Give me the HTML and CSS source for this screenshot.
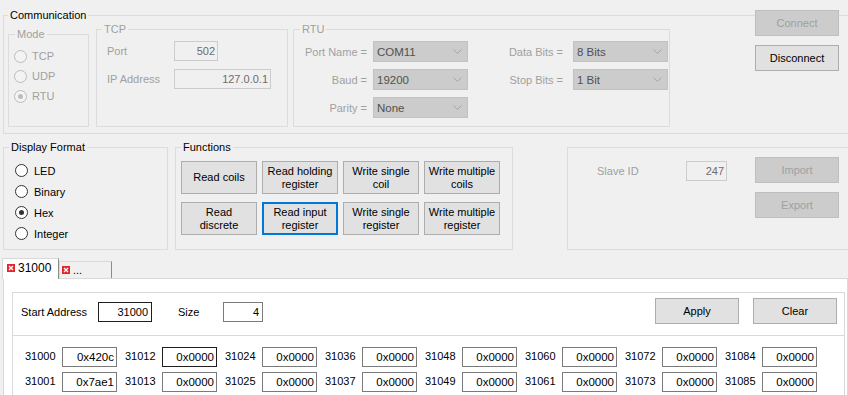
FILE: index.html
```html
<!DOCTYPE html>
<html>
<head>
<meta charset="utf-8">
<title>Modbus</title>
<link rel="stylesheet" href="styles.css">
</head>
<body>
<div class="app">
  <fieldset class="group comm">
    <legend>Communication</legend>
    <div class="comm-body">
      <fieldset class="group mode disabled">
        <legend>Mode</legend>
        <div class="radios">
          <div class="radio"><span class="circle"></span>TCP</div>
          <div class="radio"><span class="circle"></span>UDP</div>
          <div class="radio"><span class="circle on"></span>RTU</div>
        </div>
      </fieldset>
      <fieldset class="group tcp disabled">
        <legend>TCP</legend>
        <div class="tcp-form">
          <span class="lbl">Port</span><span class="tb w-port">502</span>
          <span class="lbl">IP Address</span><span class="tb w-ip">127.0.0.1</span>
        </div>
      </fieldset>
      <fieldset class="group rtu disabled">
        <legend>RTU</legend>
        <div class="rtu-form">
          <span class="lbl r l1">Port Name =</span>
          <span class="combo">COM11<svg width="9" height="5" viewBox="0 0 9 5"><polyline points="0.5,0.5 4.5,4.5 8.5,0.5" fill="none" stroke="#a6a6a6" stroke-width="1"/></svg></span>
          <span class="lbl r l2">Data Bits =</span>
          <span class="combo">8 Bits<svg width="9" height="5" viewBox="0 0 9 5"><polyline points="0.5,0.5 4.5,4.5 8.5,0.5" fill="none" stroke="#a6a6a6" stroke-width="1"/></svg></span>
          <span class="lbl r l1">Baud =</span>
          <span class="combo">19200<svg width="9" height="5" viewBox="0 0 9 5"><polyline points="0.5,0.5 4.5,4.5 8.5,0.5" fill="none" stroke="#a6a6a6" stroke-width="1"/></svg></span>
          <span class="lbl r l2">Stop Bits =</span>
          <span class="combo">1 Bit<svg width="9" height="5" viewBox="0 0 9 5"><polyline points="0.5,0.5 4.5,4.5 8.5,0.5" fill="none" stroke="#a6a6a6" stroke-width="1"/></svg></span>
          <span class="lbl r l1">Parity =</span>
          <span class="combo">None<svg width="9" height="5" viewBox="0 0 9 5"><polyline points="0.5,0.5 4.5,4.5 8.5,0.5" fill="none" stroke="#a6a6a6" stroke-width="1"/></svg></span>
        </div>
      </fieldset>
      <div class="btn-col conn-btns">
        <button class="btn" disabled>Connect</button>
        <button class="btn">Disconnect</button>
      </div>
    </div>
  </fieldset>

  <div class="row2">
    <fieldset class="group fmt">
      <legend>Display Format</legend>
      <div class="radios">
        <div class="radio"><span class="circle"></span>LED</div>
        <div class="radio"><span class="circle"></span>Binary</div>
        <div class="radio"><span class="circle on"></span>Hex</div>
        <div class="radio"><span class="circle"></span>Integer</div>
      </div>
    </fieldset>
    <fieldset class="group funcs">
      <legend>Functions</legend>
      <div class="func-grid">
        <button class="fbtn">Read coils</button>
        <button class="fbtn">Read holding<br>register</button>
        <button class="fbtn">Write single<br>coil</button>
        <button class="fbtn">Write multiple<br>coils</button>
        <button class="fbtn">Read<br>discrete</button>
        <button class="fbtn focus">Read input<br>register</button>
        <button class="fbtn">Write single<br>register</button>
        <button class="fbtn">Write multiple<br>register</button>
      </div>
    </fieldset>
    <div class="group slave disabled">
      <div class="slave-id">
        <span class="lbl slave-lbl">Slave ID</span>
        <span class="tb w-slave">247</span>
      </div>
      <div class="btn-col">
        <button class="btn" disabled>Import</button>
        <button class="btn" disabled>Export</button>
      </div>
    </div>
  </div>

  <div class="tabs">
    <div class="tab active"><svg class="x" width="8" height="8" viewBox="0 0 8 8"><rect x="0" y="0" width="8" height="8" fill="#e3262c"/><path d="M2 2 L6 6 M6 2 L2 6" stroke="#fff" stroke-width="1.3"/></svg><span>31000</span></div>
    <div class="tab"><svg class="x" width="8" height="8" viewBox="0 0 8 8"><rect x="0" y="0" width="8" height="8" fill="#e3262c"/><path d="M2 2 L6 6 M6 2 L2 6" stroke="#fff" stroke-width="1.3"/></svg><span>...</span></div>
  </div>
  <div class="tab-page">
    <div class="panel">
      <div class="panel-head">
        <span class="lbl start-lbl">Start Address</span>
        <span class="tb w-start dark">31000</span>
        <span class="lbl size-lbl">Size</span>
        <span class="tb w-size">4</span>
        <button class="btn apply">Apply</button>
        <button class="btn clear">Clear</button>
      </div>
      <div class="regs">
        <div class="cell"><span class="rl">31000</span><span class="tb rv">0x420c</span></div>
        <div class="cell"><span class="rl">31012</span><span class="tb rv dark">0x0000</span></div>
        <div class="cell"><span class="rl">31024</span><span class="tb rv">0x0000</span></div>
        <div class="cell"><span class="rl">31036</span><span class="tb rv">0x0000</span></div>
        <div class="cell"><span class="rl">31048</span><span class="tb rv">0x0000</span></div>
        <div class="cell"><span class="rl">31060</span><span class="tb rv">0x0000</span></div>
        <div class="cell"><span class="rl">31072</span><span class="tb rv">0x0000</span></div>
        <div class="cell"><span class="rl">31084</span><span class="tb rv">0x0000</span></div>
        <div class="cell"><span class="rl">31001</span><span class="tb rv">0x7ae1</span></div>
        <div class="cell"><span class="rl">31013</span><span class="tb rv">0x0000</span></div>
        <div class="cell"><span class="rl">31025</span><span class="tb rv">0x0000</span></div>
        <div class="cell"><span class="rl">31037</span><span class="tb rv">0x0000</span></div>
        <div class="cell"><span class="rl">31049</span><span class="tb rv">0x0000</span></div>
        <div class="cell"><span class="rl">31061</span><span class="tb rv">0x0000</span></div>
        <div class="cell"><span class="rl">31073</span><span class="tb rv">0x0000</span></div>
        <div class="cell"><span class="rl">31085</span><span class="tb rv">0x0000</span></div>
      </div>
    </div>
  </div>
</div>
</body>
</html>
```

FILE: styles.css
```css
* { box-sizing: border-box; }
html, body { margin: 0; padding: 0; overflow: hidden; }
body {
  width: 848px;
  height: 395px;
  background: #f0f0f0;
  font-family: "Liberation Sans", Arial, sans-serif;
  font-size: 11px;
  color: #000;
}
.app { padding-top: 8px; width: 848px; height: 395px; overflow: hidden; }

.group {
  margin: 0;
  padding: 0;
  border: 1px solid #dcdcdc;
  min-width: 0;
}
.group > legend {
  padding: 0 2px;
  margin-left: 5px;
  line-height: 14px;
  height: 14px;
}
.disabled > legend, .disabled .lbl, .disabled .radio { color: #a0a0a0; }

.comm { margin-left: 3px; width: 845px; height: 126px; border-right: none; }
.comm > legend { margin-left: 4px; }
.comm-body { display: flex; align-items: flex-start; padding-left: 4px; }

.mode { margin-top: 5px; width: 81px; height: 100px; flex: none; }
.mode > legend { margin-left: 6px; }
.mode .radios { padding: 5px 0 0 5px; }

.radios { display: flex; flex-direction: column; }
.radio { display: flex; align-items: center; height: 20px; gap: 5px; }
.circle {
  width: 13px; height: 13px; flex: none;
  border-radius: 50%;
  border: 1px solid #333;
  background: #fff;
  display: flex; align-items: center; justify-content: center;
}
.circle.on::after { content: ""; width: 5px; height: 5px; border-radius: 50%; background: #333; }
.disabled .circle { border-color: #bcbcbc; background: #f3f3f3; }
.disabled .circle.on::after { background: #bcbcbc; }

.tcp { margin-left: 7px; width: 192px; height: 105px; flex: none; }
.tcp-form {
  display: grid;
  grid-template-columns: 67px auto;
  grid-auto-rows: 20px;
  row-gap: 8px;
  padding: 5px 0 0 10px;
  align-items: center;
}

.tb {
  display: flex; align-items: center; justify-content: flex-end;
  height: 20px;
  border: 1px solid #7a7a7a;
  background: #fff;
  padding-right: 2px;
  color: #000;
}
.tb.dark { border-color: #1e1e1e; }
.disabled .tb { border-color: #cccccc; background: #f0f0f0; color: #6d6d6d; }
.w-port { width: 44px; }
.w-ip { width: 97px; }
.w-slave { width: 41px; }

.rtu { margin-left: 5px; width: 377px; height: 105px; flex: none; }
.rtu > legend { margin-left: 6px; }
.rtu-form {
  display: grid;
  grid-template-columns: 79px 95px 105px 95px;
  grid-auto-rows: 21px;
  row-gap: 7px;
  padding-top: 5px;
  align-items: center;
}
.lbl.r { text-align: right; }
.lbl.l1 { padding-right: 6px; }
.lbl.l2 { padding-right: 10px; }
.combo {
  display: flex; align-items: center;
  height: 21px;
  background: #cccccc;
  border: 1px solid #c2c2c2;
  color: #505050;
  padding-left: 3px;
  font-size: 11.5px;
}
.combo svg { margin-left: auto; margin-right: 5px; }

.btn-col { display: flex; flex-direction: column; gap: 9px; flex: none; }
.conn-btns { margin-left: 85px; margin-top: -12px; }
.btn {
  width: 84px; height: 26px; flex: none;
  border: 1px solid #adadad;
  background: #e1e1e1;
  font: inherit;
  color: #000;
  padding: 0;
  display: flex; align-items: center; justify-content: center;
}
.btn:disabled { background: #cccccc; border-color: #bfbfbf; color: #a0a0a0; }

.row2 { display: flex; align-items: flex-start; margin-top: 6px; }
.fmt { margin-left: 3px; width: 165px; height: 110px; flex: none; }
.fmt .radios { padding: 6px 0 0 11px; }
.fmt .radio { height: 21px; gap: 6px; }

.funcs { margin-left: 7px; width: 338px; height: 110px; flex: none; }
.func-grid {
  display: grid;
  grid-template-columns: repeat(4, 76px);
  grid-auto-rows: 33px;
  column-gap: 5px;
  row-gap: 8px;
  padding: 7px 0 0 5px;
}
.fbtn {
  border: 1px solid #adadad;
  background: #e1e1e1;
  font: inherit;
  line-height: 13px;
  color: #000;
  padding: 0;
  text-align: center;
}
.fbtn.focus { border: 2px solid #0078d7; }

.slave {
  margin-left: 54px; margin-top: 7px;
  width: 281px; height: 103px; flex: none;
  border-right: none;
  display: flex; align-items: flex-start;
  padding: 9px 0 0 29px;
}
.slave-id { display: flex; align-items: center; margin-top: 4px; }
.slave-lbl { width: 89px; }
.slave .btn-col { margin-left: 28px; }

.tabs { display: flex; align-items: flex-end; margin-top: 8px; padding-left: 2px; height: 20px; position: relative; z-index: 1; }
.tab {
  display: flex; align-items: center;
  height: 17px;
  border: 1px solid #d9d9d9;
  border-right-color: #8c8c8c;
  border-bottom: none;
  background: #f0f0f0;
  width: 53px;
  padding-left: 2px;
  gap: 3px;
  font-size: 11px;
}
.tab.active {
  height: 21px;
  margin-bottom: -1px;
  width: 57px;
  background: #fff;
  padding-left: 4px;
  padding-bottom: 2px;
  font-size: 12px;
}
.tab .x { flex: none; }

.tab-page {
  margin-left: 3px;
  width: 845px;
  height: 120px;
  border: 1px solid #d9d9d9;
  border-bottom: none;
  background: #fff;
  padding: 13px 2px 0 8px;
}
.panel { border: 1px solid #d9d9d9; border-bottom: none; background: #fff; height: 106px; }
.panel-head {
  display: flex; align-items: flex-start;
  height: 43px;
  padding: 5px 7px 0 8px;
  border-bottom: 1px solid #d9d9d9;
}
.start-lbl { width: 77px; line-height: 14px; margin-top: 7px; }
.w-start { width: 54px; margin-top: 4px; padding-right: 3px; }
.size-lbl { margin-left: 26px; width: 45px; line-height: 14px; margin-top: 7px; }
.w-size { width: 40px; margin-top: 4px; padding-right: 3px; }
.apply { margin-left: auto; }
.clear { margin-left: 14px; }

.regs {
  display: grid;
  grid-template-columns: repeat(8, 92px);
  grid-auto-rows: 20px;
  column-gap: 8px;
  row-gap: 5px;
  padding: 11px 0 0 12px;
}
.cell { display: flex; align-items: center; }
.rl { width: 37px; padding-bottom: 2px; font-size: 11px; }
.rv { width: 55px; font-size: 11.5px; }
```
